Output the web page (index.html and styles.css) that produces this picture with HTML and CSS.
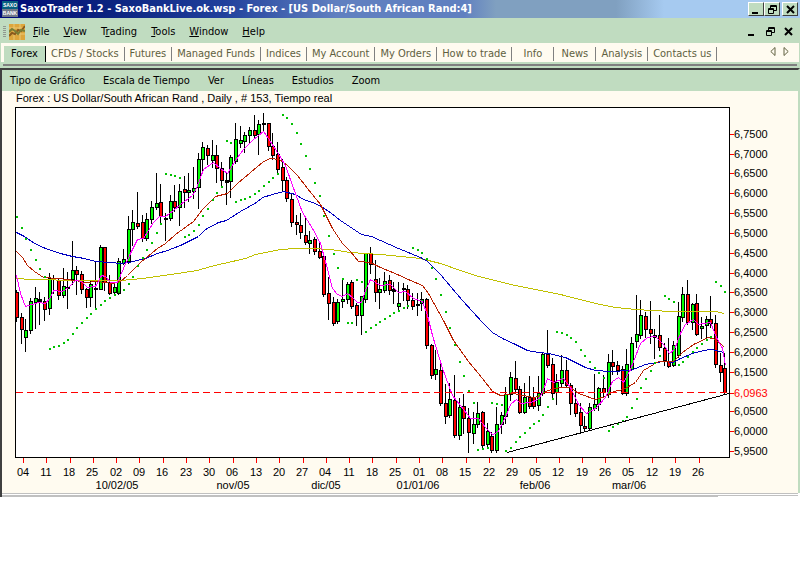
FILE: index.html
```html
<!DOCTYPE html>
<html lang="es">
<head>
<meta charset="utf-8">
<title>SaxoTrader 1.2</title>
<link rel="stylesheet" href="styles.css">
</head>
<body>
<div class="window">
  <header class="titlebar">
    <span class="brand"><span class="brand-top">SAXO</span><span class="brand-bottom">BANK</span></span>
    <h1 class="title">SaxoTrader 1.2 - SaxoBankLive.ok.wsp - Forex - [US Dollar/South African Rand:4]</h1>
    <div class="controls">
      <button class="control" aria-label="Minimize"><svg width="9" height="9"><path d="M0 8h6" class="thick"/></svg></button>
      <button class="control" aria-label="Restore"><svg width="9" height="9"><path d="M2.500 3V.5h6v5H6M.5 3.500h5v5h-5zM2 1.500h7M0 4.500h6"/></svg></button>
      <button class="control close" aria-label="Close"><svg width="9" height="9"><path d="M1 1l7 7M8 1l-7 7" class="cross"/></svg></button>
    </div>
  </header>

  <nav class="menubar">
    <span class="grip"></span>
    <svg class="doc-icon" width="16" height="16"><rect width="16" height="16" fill="#dda63c"/><path d="M0 4h16M0 10h16M5 0v16M11 0v16" stroke="#e9c877"/><path d="M0 12l3-3 3 1 3-4 3 1 4-5" fill="none" stroke="#8b5a1c" stroke-width="2"/><path d="M0 8l3-3 3 2 3 3 3-4 4 1" fill="none" stroke="#7a7d35" stroke-width="2"/></svg>
    <button><u>F</u>ile</button>
    <button><u>V</u>iew</button>
    <button>T<u>r</u>ading</button>
    <button><u>T</u>ools</button>
    <button><u>W</u>indow</button>
    <button><u>H</u>elp</button>
    <div class="child-controls">
      <button aria-label="Minimize chart"><svg width="9" height="9"><path d="M0 8h6" class="thick"/></svg></button>
      <button aria-label="Restore chart"><svg width="9" height="9"><path d="M2.500 3V.5h6v5H6M.5 3.500h5v5h-5zM2 1.500h7M0 4.500h6"/></svg></button>
      <button aria-label="Close chart"><svg width="9" height="9"><path d="M1 1l7 7M8 1l-7 7" class="cross"/></svg></button>
    </div>
  </nav>

  <nav class="tabs">
    <a href="#" class="tab active">Forex</a>
    <a href="#" class="tab">CFDs / Stocks</a>
    <a href="#" class="tab">Futures</a>
    <a href="#" class="tab">Managed Funds</a>
    <a href="#" class="tab">Indices</a>
    <a href="#" class="tab">My Account</a>
    <a href="#" class="tab">My Orders</a>
    <a href="#" class="tab">How to trade</a>
    <a href="#" class="tab">Info</a>
    <a href="#" class="tab">News</a>
    <a href="#" class="tab">Analysis</a>
    <a href="#" class="tab">Contacts us</a>
    <div class="scrollers">
      <button aria-label="Previous tabs"><svg width="6" height="9"><path d="M5 .5v8L.8 4.500z"/></svg></button>
      <button aria-label="Next tabs"><svg width="6" height="9"><path d="M1 .5v8L5.200 4.500z"/></svg></button>
    </div>
  </nav>
  <div class="rule"></div>

  <main class="panel">
    <nav class="chart-menu">
      <button>Tipo de Gráfico</button>
      <button>Escala de Tiempo</button>
      <button>Ver</button>
      <button>Líneas</button>
      <button>Estudios</button>
      <button>Zoom</button>
    </nav>
    <p class="caption">Forex : US Dollar/South African Rand , Daily , # 153, Tiempo real</p>
    <svg class="chart" id="chart" viewBox="2 105 796 388" role="img" aria-label="USD/ZAR"></svg>
  </main>
  <div class="status"></div>
</div>
<script src="chart.js"></script>
</body>
</html>
```
FILE: styles.css
```css
* { box-sizing: border-box; }
body {
  margin: 0;
  background: #fff;
  color: #000;
  font: 11px/16px "DejaVu Sans Condensed", "Liberation Sans", sans-serif;
}
button {
  margin: 0;
  padding: 0;
  border: 0;
  background: none;
  color: inherit;
  font: inherit;
}
svg { display: block; }

.titlebar {
  display: flex;
  align-items: center;
  height: 18px;
  padding: 0 2px;
  background: linear-gradient(90deg, #000c78 0, #0c2480 14%, #20409c 28%, #6080c0 42%, #6080c0 58%, #80a0c0 62%, #80a0c0 77%, #a6caf0 83%);
}
.brand {
  width: 16px;
  overflow: hidden;
  font: bold 5px/8px "Liberation Sans", sans-serif;
  text-align: center;
  color: #fff;
}
.brand-top, .brand-bottom { display: block; }
.brand-top { background: #086080; }
.brand-bottom { background: #707888; }
.title {
  flex: 1;
  margin: 0 0 0 2px;
  overflow: hidden;
  color: #fff;
  font: bold 11px/18px "DejaVu Sans Condensed", sans-serif;
  white-space: nowrap;
}
.controls { display: flex; }
.control {
  display: grid;
  place-items: center;
  width: 16px;
  height: 14px;
  background: #c0dcc0;
  border: 1px solid;
  border-color: #fff #404040 #404040 #fff;
}
.close { margin-left: 2px; }
.controls path, .child-controls path { fill: none; stroke: #000; }
.controls .thick, .child-controls .thick { stroke-width: 2; }
.controls .cross, .child-controls .cross { stroke-width: 2; }

.menubar {
  display: flex;
  align-items: center;
  gap: 14px;
  height: 25px;
  padding: 2px 7px 0 3px;
  background: #c0dcc0;
}
.grip {
  width: 3px;
  height: 12px;
  background: repeating-linear-gradient(#909890 0 1px, #c0dcc0 1px 2px);
}
.doc-icon { margin: 0 -6px 0 -11px; }
.child-controls { display: flex; gap: 9px; margin-left: auto; }

.tabs {
  display: flex;
  height: 19px;
  padding: 3px 3px 0;
  background: #fffbf0;
  border: solid #c0dcc0;
  border-width: 0 1px;
}
.tab {
  min-width: 42px;
  padding: 0 5px;
  border-right: 1px solid transparent;
  color: #606040;
  text-align: center;
  text-decoration: none;
  white-space: nowrap;
  border-image: linear-gradient(transparent 2px, #808080 2px 14px, transparent 14px) 1;
}
.tab.active {
  background: #c0dcc0;
  border-image: none;
  border-right-color: #000;
  color: #000;
}
.scrollers {
  display: flex;
  gap: 7px;
  margin: 0 7px 0 auto;
}
.scrollers button { align-self: flex-start; padding-top: 1px; }
.scrollers path { fill: none; stroke: #606040; }
.rule {
  height: 6px;
  background: #808080;
  border: solid #c0dcc0;
  border-width: 2px 3px;
}

.panel {
  border: solid #404040;
  border-width: 2px 2px 0 2px;
  border-right-color: #c0dcc0;
  background: #fffbf0;
}
.chart-menu {
  display: flex;
  gap: 18px;
  height: 21px;
  padding-left: 8px;
  background: #c0dcc0;
}
.caption {
  margin: 0;
  padding-left: 14px;
  font: 11px/14px "Liberation Sans", sans-serif;
}
.chart { width: 100%; height: auto; }
.chart text { font: 11px "Liberation Sans", sans-serif; }
.dates text { text-anchor: middle; }
.status {
  height: 4px;
  margin-right: 2px;
  border-left: 2px solid #404040;
  background:
    linear-gradient(#c0c0c0, #c0c0c0) 0 0 / 100% 1px no-repeat,
    linear-gradient(#c0c0c0, #c0c0c0) 0 2px / 100% 1px no-repeat,
    linear-gradient(#c0c0c0, #c0c0c0) 0 3px / 90% 1px no-repeat;
}
```
FILE: chart.js
```js
// Each candle: high, body top, body bottom, low, then g (up), r (down) or d (doji).
const candles = `
290 292 317 321 r;313 317 329 343 r;319 330 337 351 g;298 301 330 333 g;287 298 302 328 g;
292 299 301 324 d;297 301 309 320 r;273 278 308 314 g;275 278 279 293 d;279 280 295 299 r;
268 286 295 297 g;272 287 288 308 d;241 270 279 284 g;266 270 274 294 r;271 274 289 293 r;
288 289 297 307 r;281 284 297 306 g;261 288 289 307 d;245 247 289 289 g;247 247 282 290 r;
275 282 293 294 r;282 287 292 294 g;258 261 293 294 g;249 259 263 264 g;216 229 261 263 g;
210 222 229 245 g;192 223 226 228 r;215 222 238 241 r;213 219 238 240 g;201 207 219 223 g;
173 203 207 209 g;184 202 216 223 r;213 218 219 240 d;195 201 218 220 g;185 201 207 211 r;
184 191 207 225 g;176 189 192 207 r;173 190 192 201 g;167 188 191 198 g;153 159 187 208 g;
142 147 159 173 g;145 148 155 164 r;140 155 160 167 g;145 155 168 182 r;162 168 180 187 r;
172 180 182 204 d;155 157 181 197 g;123 139 161 163 g;126 140 143 147 g;132 135 141 152 g;
127 130 135 143 g;115 130 135 137 r;120 124 134 154 g;113 123 124 131 d;123 123 146 150 r;
133 146 155 159 r;142 154 169 173 r;159 167 180 190 r;177 180 198 201 r;193 199 222 226 r;
215 222 224 234 r;213 225 232 238 r;217 235 242 244 r;231 240 243 253 g;237 239 251 254 r;
241 251 257 258 r;256 256 294 296 r;277 293 303 319 r;297 302 323 325 r;299 302 321 323 g;
278 299 301 307 g;282 284 299 303 g;280 282 306 308 r;303 305 315 325 r;296 296 315 334 g;
253 253 299 302 g;247 253 264 273 r;260 279 292 301 r;278 289 292 308 g;272 281 290 292 g;
275 280 290 294 r;282 289 291 303 d;282 303 306 309 g;283 288 289 300 d;285 289 300 308 r;
293 300 306 309 r;293 304 305 315 d;292 299 303 310 g;298 299 345 348 r;344 345 375 378 r;
350 369 374 379 g;363 370 403 405 r;384 403 416 423 r;383 399 415 417 g;375 400 435 437 r;
398 407 435 439 g;394 406 418 433 r;408 418 432 452 r;412 424 433 443 g;402 413 424 427 g;
411 412 445 447 r;423 431 444 446 g;432 436 450 452 r;407 424 450 452 g;412 415 424 433 g;
387 394 416 423 g;372 377 394 400 g;361 378 389 391 r;386 389 412 413 r;383 397 412 413 g;
376 397 406 408 r;387 397 406 408 r;376 393 405 410 g;352 354 393 395 g;330 354 365 367 r;
358 364 393 397 r;374 382 392 404 g;355 370 383 386 g;360 370 385 387 r;383 385 403 414 r;
388 403 413 416 r;403 412 425 433 r;416 426 428 430 r;403 407 428 429 g;374 404 408 410 g;
387 388 404 410 g;375 388 392 397 r;354 362 394 397 g;350 362 366 374 r;361 365 370 374 r;
366 369 393 394 r;349 364 393 395 g;337 343 369 370 g;295 334 341 347 g;300 315 335 338 g;
312 316 329 337 r;301 329 333 343 r;329 335 337 358 g;315 335 347 350 r;343 348 360 365 r;
338 361 366 367 r;341 345 365 366 g;302 316 355 357 g;287 294 317 321 g;280 294 322 324 r;
303 304 322 329 g;294 303 334 335 r;317 326 328 338 g;316 319 325 338 g;296 319 323 327 r;
315 323 364 367 r;353 365 372 381 r;353 368 392 394 r`.trim().split(";").map(s => s.trim().split(" "));

// Parabolic SAR, one value per candle.
const sar = [217,228,239,250,260,269,277,349,347,346,343,340,334,328,323,318,314,309,305,301,298,295,292,290,284,277,
  266,258,250,243,233,224,174,175,176,178,237,235,231,225,216,209,200,193,187,141,143,202,200,199,197,194,191,186,182,
  178,174,115,118,124,133,144,156,169,183,196,216,236,254,268,279,323,323,280,282,332,328,325,322,319,316,313,311,308,
  306,248,250,253,259,268,279,295,312,328,345,362,376,391,403,450,449,448,403,404,405,451,448,442,437,433,428,424,421,
  415,407,399,332,333,335,338,342,350,356,362,368,373,378,431,427,424,421,417,408,399,388,379,371,363,356,296,299,302,
  365,362,357,352,348,344,340,337,282,286,292];

const lines = [
  ["#c0c000", 1, "16,278 30,279 80,280 120,280 142,278 170,274 197,270 210,266 245,258 255,254 280,249 295,248 310,248 330,249 350,252 380,254 420,258 440,263 460,270 475,275 494,280 515,285 540,290 560,294 583,300 600,304 615,307 635,309 670,311 715,311 724,313"],
  ["#0000c0", 1, "16,232 24,236 34,243 45,248 60,253 72,256 84,258 95,261 110,262 120,263 128,262 145,258 157,253 167,250 180,245 198,236 205,229 218,222 226,220 240,211 256,202 262,197 272,194 283,191 295,194 303,199 312,202 321,206 331,213 340,220 355,230 361,234 371,236 380,240 398,248 420,257 427,261 440,274 445,280 462,300 472,311 482,322 492,332 502,338 515,344 527,350 538,352 548,353 565,357 575,362 585,367 595,370 610,371 630,370 645,364 663,361 673,362 680,358 692,353 703,350 711,349 724,352"],
  ["#b82000", 1, "16,251 22,257 27,265 34,271 43,277 58,278 75,280 85,282 97,281 112,283 120,281 127,275 140,262 157,248 165,243 175,234 193,221 202,209 215,196 227,193 237,183 250,172 263,161 270,158 279,159 287,165 297,175 307,188 320,204 332,228 342,243 350,251 358,261 370,262 380,267 397,274 410,280 422,285 428,293 433,302 443,320 453,340 468,361 482,378 492,391 500,395 513,393 533,397 538,396 547,390 560,387 570,387 578,393 595,399 605,396 613,391 623,389 635,382 643,370 658,361 673,361 682,352 693,344 708,337 715,339 724,347"],
  ["#ff00ff", 1, "16,275 20,293 25,306 38,302 45,303 50,297 53,290 62,291 68,287 75,280 81,281 87,287 95,286 101,275 105,276 110,282 117,282 123,268 130,253 137,239 143,238 153,222 159,216 165,216 173,210 180,204 192,195 196,188 203,169 213,162 220,168 227,173 235,160 243,149 252,140 263,131 268,138 277,152 285,165 292,185 302,212 312,228 320,243 325,261 332,288 337,294 342,296 347,293 352,297 357,302 361,302 365,290 370,279 380,285 390,284 398,292 405,291 413,298 422,301 427,315 432,335 442,368 452,395 460,405 470,418 478,418 485,427 492,434 497,432 505,417 510,404 516,399 520,403 530,402 538,399 542,392 547,378 553,382 563,378 570,387 578,404 586,413 595,408 605,397 612,381 618,377 623,382 630,369 640,343 647,337 655,336 663,344 669,353 674,349 680,333 685,324 693,319 698,324 710,322 716,337 722,348 725,365"]
];

const days = "04 11 18 25 02 09 16 23 30 06 13 20 27 04 11 18 25 01 08 15 22 29 05 12 19 26 05 12 19 26".split(" ");
const months = [[117, "10/02/05"], [233, "nov/05"], [326, "dic/05"], [418, "01/01/06"], [535, "feb/06"], [629, "mar/06"]];
const prices = [[134, "6,7500"], [154, "6,7000"], [173, "6,6500"], [193, "6,6000"], [213, "6,5500"], [233, "6,5000"],
  [253, "6,4500"], [273, "6,4000"], [292, "6,3500"], [312, "6,3000"], [332, "6,2500"], [352, "6,2000"], [372, "6,1500"],
  [393, "6,0963"], [411, "6,0500"], [431, "6,0000"], [451, "5,9500"]];

const rect = (x, y, w, h, fill) => `<rect x="${x}" y="${y}" width="${w}" height="${h}" fill="${fill}"/>`;
const column = i => Math.floor(16.4 + 4.66 * i);
const fills = { g: "#00ff00", r: "#ff0000" };

let out = `<g shape-rendering="crispEdges">` + rect(15, 107, 715, 351, "#000") + rect(16, 108, 713, 349, "#fff");

candles.forEach(([high, top, bottom, low, kind], i) => {
  const x = column(i);
  out += rect(x, high, 1, low - high + 1, "#000");
  out += rect(x - 1, top, 4, bottom - top + 1, "#000");
  if (kind !== "d") out += rect(x, +top + 1, 2, Math.max(1, bottom - top - 1), fills[kind]);
});
lines.forEach(([color, width, points]) => {
  out += `<polyline points="${points}" transform="translate(.5 .5)" fill="none" stroke="${color}" stroke-width="${width}"/>`;
});
sar.forEach((y, i) => { out += rect(column(i), y - 1, 2, 2, "#00c000"); });

out += `<path d="M16 392.500H729" stroke="#f00" stroke-dasharray="7 4"/>`;
out += `<path d="M507 452.500L729 393.500" stroke="#000"/>`;
days.forEach((_, i) => { out += rect(Math.floor(23.400 + 23.300 * i), 458, 1, 5, "#f00"); });
prices.forEach(([y]) => { out += rect(730, y, 4, 1, "#f00"); });
out += `</g><g class="dates">`;
days.forEach((d, i) => { out += `<text x="${Math.floor(23 + 23.300 * i)}" y="476">${d}</text>`; });
months.forEach(([x, m]) => { out += `<text x="${x}" y="489">${m}</text>`; });
out += `</g>`;
prices.forEach(([y, p]) => { out += `<text x="734" y="${y + 4}" fill="${p === "6,0963" ? "#f00" : "#000"}">${p}</text>`; });

document.getElementById("chart").innerHTML = out;
```
